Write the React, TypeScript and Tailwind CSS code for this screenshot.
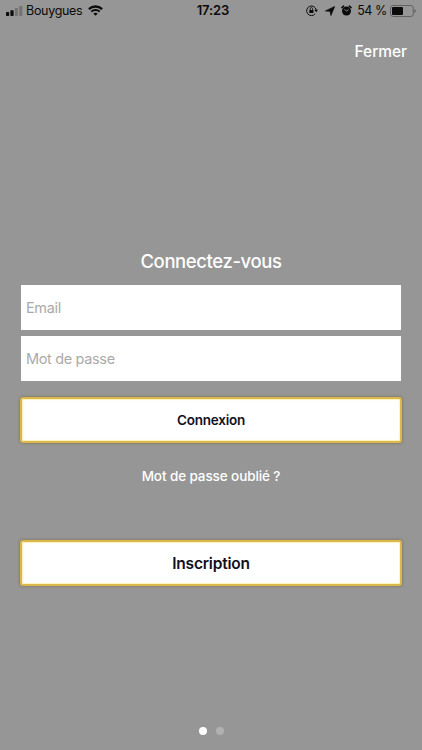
import React from 'react';

const SignalBars: React.FC = () => (
    <svg width="17" height="10" viewBox="0 0 17 10" className="shrink-0">
        <rect x="0" y="6" width="3.2" height="4" rx="0.7" fill="#0b0b0b" />
        <rect x="4.4" y="4.2" width="3.2" height="5.8" rx="0.7" fill="#0b0b0b" />
        <rect x="8.8" y="2" width="3.2" height="8" rx="0.7" fill="#747474" />
        <rect x="13.2" y="0" width="3.2" height="10" rx="0.7" fill="#747474" />
    </svg>
);

const WifiIcon: React.FC = () => (
    <svg width="15" height="11" viewBox="0 0 15 11" className="shrink-0" fill="none" stroke="#0b0b0b">
        <path d="M0.9 4.1C4.6 0.6 10.4 0.6 14.1 4.1" strokeWidth="2.3" />
        <path d="M3.3 6.6C5.6 4.4 9.4 4.4 11.7 6.6" strokeWidth="2" />
        <path d="M7.5 10.8L5.3 8.6C6.5 7.4 8.5 7.4 9.7 8.6Z" fill="#0b0b0b" stroke="none" />
    </svg>
);

const RotationLockIcon: React.FC = () => (
    <svg width="12" height="11" viewBox="0 0 12 11" className="shrink-0" fill="none" stroke="#0b0b0b">
        <path d="M9.2 8.8A4.8 4.8 0 1 1 10.2 5" strokeWidth="1" />
        <path d="M8.3 4.8H12L10.2 7.2Z" fill="#0b0b0b" stroke="none" />
        <rect x="3.3" y="4.9" width="4.2" height="3.1" rx="0.4" fill="#0b0b0b" stroke="none" />
        <path d="M4.2 5V3.8A1.2 1.2 0 0 1 6.6 3.8V5" strokeWidth="0.8" />
    </svg>
);

const LocationIcon: React.FC = () => (
    <svg width="10" height="10" viewBox="0 0 10 10" className="shrink-0">
        <path d="M9.7 0.4L5.9 9.5L5.1 5.3L0.4 5Z" fill="#0b0b0b" stroke="#0b0b0b" strokeWidth="0.7" strokeLinejoin="round" />
    </svg>
);

const AlarmIcon: React.FC = () => (
    <svg width="11" height="11" viewBox="0 0 11 11" className="shrink-0" fill="none">
        <circle cx="5.5" cy="6" r="4.5" fill="#0b0b0b" />
        <path d="M0.9 2.6L2.6 1.1M10.1 2.6L8.4 1.1" stroke="#0b0b0b" strokeWidth="1.5" strokeLinecap="round" />
        <path d="M3.5 4.2L5.5 6.2L7.6 4.6" stroke="#969696" strokeWidth="0.9" />
    </svg>
);

const BatteryIcon: React.FC = () => (
    <svg width="27" height="12" viewBox="0 0 27 12" className="shrink-0">
        <rect x="0.5" y="0.5" width="22.8" height="11" rx="2.6" fill="none" stroke="#5c5c5c" strokeWidth="0.9" />
        <rect x="2" y="2" width="11" height="8" rx="1" fill="#0b0b0b" />
        <path d="M24.5 4.1C26.3 4.7 26.3 7.3 24.5 7.9Z" fill="#5c5c5c" />
    </svg>
);

const StatusBar: React.FC = () => (
    <div className="grid h-[22px] grid-cols-[1fr_auto_1fr] items-center pl-1.5 pr-[5px] text-[#0b0b0b]">
        <div className="flex items-center">
            <span className="pb-px"><SignalBars /></span>
            <span className="ml-[3px] pt-px text-[12.5px] tracking-[-0.3px]">Bouygues</span>
            <span className="ml-[6px] pb-0.5"><WifiIcon /></span>
        </div>
        <span className="pl-[3px] text-[13px] font-semibold tracking-[-0.1px]">17:23</span>
        <div className="flex items-center justify-end">
            <span className="pb-px"><RotationLockIcon /></span>
            <span className="ml-[7px] pb-px"><LocationIcon /></span>
            <span className="ml-[6px] pb-0.5"><AlarmIcon /></span>
            <span className="ml-[5px] pt-px text-[12.5px] tracking-[-0.4px]">54 %</span>
            <span className="ml-[3px] pb-px"><BatteryIcon /></span>
        </div>
    </div>
);

interface ActionButtonProps {
    label: string;
    className?: string;
}

const ActionButton: React.FC<ActionButtonProps> = ({ label, className = '' }) => (
    <button
        className={`h-[46px] w-full rounded-[3px] border-2 border-[#dcb84c] bg-white font-semibold text-[#10101c] shadow-[0_0_3px_0_rgba(90,72,20,0.6),inset_0_0_1px_1px_#fff3b8] ${className}`}
    >
        {label}
    </button>
);

const inputClass =
    'h-[45px] w-full bg-white px-[5px] text-[14.5px] tracking-[-0.35px] text-[#111] outline-none placeholder:text-[#aaaaaa] placeholder:opacity-100';

export default function App() {
    return (
        <div className="flex h-[750px] w-[422px] flex-col overflow-hidden bg-[#969696] font-['Inter','Liberation_Sans',sans-serif]">
            <StatusBar />

            <div className="mt-[18px] flex h-6 items-center justify-end pr-[15px]">
                <button className="text-[15.5px] font-medium tracking-[-0.05px] text-white">Fermer</button>
            </div>

            <main className="mt-[183px] flex flex-col px-5">
                <h1 className="h-7 text-center text-[18.5px] leading-7 font-medium tracking-[-0.4px] text-white">
                    Connectez-vous
                </h1>

                <form className="mt-[10px] flex flex-col" onSubmit={(e) => e.preventDefault()}>
                    <div className="flex flex-col gap-[6px] px-px">
                        <input type="email" placeholder="Email" className={inputClass} />
                        <input type="password" placeholder="Mot de passe" className={inputClass} />
                    </div>
                    <ActionButton label="Connexion" className="mt-4 text-[13.5px] tracking-[-0.25px]" />
                </form>

                <button className="mt-[23px] h-5 text-[13.5px] leading-5 font-medium tracking-[-0.1px] text-white">
                    Mot de passe oublié ?
                </button>

                <ActionButton label="Inscription" className="mt-[54px] pt-px text-[15.5px] tracking-[-0.2px]" />
            </main>

            {/* Page indicator */}
            <div className="mt-auto mb-[15px] flex justify-center gap-[9px]">
                <span className="size-2 rounded-full bg-white" />
                <span className="size-2 rounded-full bg-[#b0b0b0]" />
            </div>
        </div>
    );
}
